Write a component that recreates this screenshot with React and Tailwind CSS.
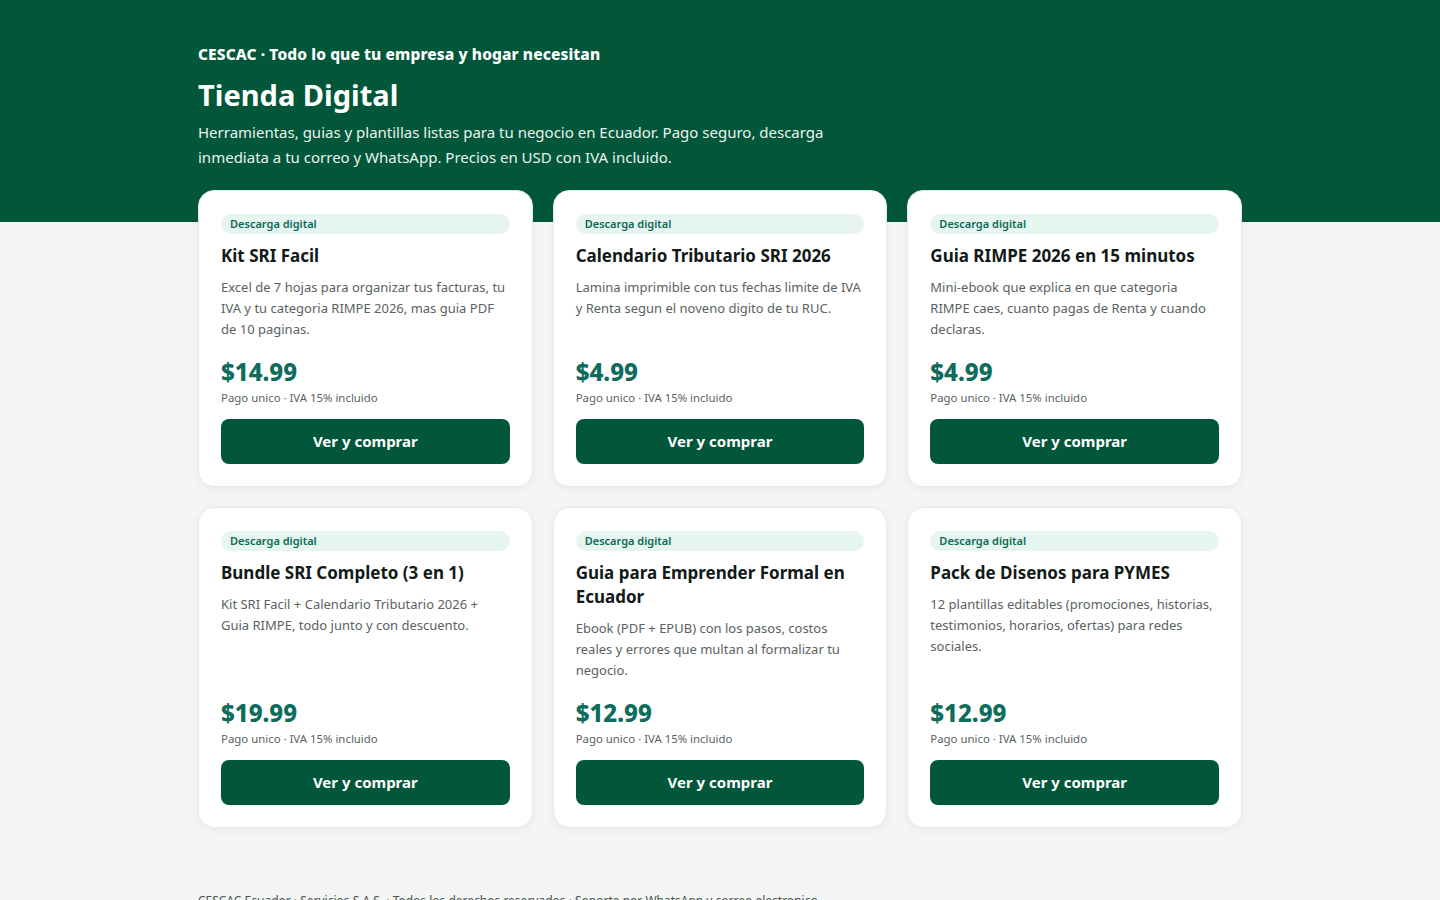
import React from "react";

const products = [
  {
    title: "Kit SRI Facil",
    desc: "Excel de 7 hojas para organizar tus facturas, tu IVA y tu categoria RIMPE 2026, mas guia PDF de 10 paginas.",
    price: "$14.99",
  },
  {
    title: "Calendario Tributario SRI 2026",
    desc: "Lamina imprimible con tus fechas limite de IVA y Renta segun el noveno digito de tu RUC.",
    price: "$4.99",
  },
  {
    title: "Guia RIMPE 2026 en 15 minutos",
    desc: "Mini-ebook que explica en que categoria RIMPE caes, cuanto pagas de Renta y cuando declaras.",
    price: "$4.99",
  },
  {
    title: "Bundle SRI Completo (3 en 1)",
    desc: "Kit SRI Facil + Calendario Tributario 2026 + Guia RIMPE, todo junto y con descuento.",
    price: "$19.99",
  },
  {
    title: "Guia para Emprender Formal en Ecuador",
    desc: "Ebook (PDF + EPUB) con los pasos, costos reales y errores que multan al formalizar tu negocio.",
    price: "$12.99",
  },
  {
    title: "Pack de Disenos para PYMES",
    desc: "12 plantillas editables (promociones, historias, testimonios, horarios, ofertas) para redes sociales.",
    price: "$12.99",
  },
];

function Card({ p }) {
  return (
    <div className="flex flex-col rounded-2xl border border-[#e3ebe8] bg-white px-[22px] pt-[23px] pb-[22px] shadow-[0_2px_8px_rgba(0,40,25,0.05)]">
      <div className="rounded-full bg-[#e7f5f1] px-[9px] py-[3px] text-[11px] font-semibold leading-[14px] text-[#0b6a55]">
        Descarga digital
      </div>
      <h2 className="mt-[10px] text-[17px] font-bold leading-[24px] text-[#111a17]">{p.title}</h2>
      <p className="mt-[9px] pr-[3px] text-[13px] leading-[21px] text-[#5a625f]">{p.desc}</p>
      <div className="mt-auto pt-[17px]">
        <div className="text-[24px] font-extrabold leading-[30px] text-[#0e6c5c]">{p.price}</div>
        <div className="mt-[4px] text-[11.4px] leading-[14px] text-[#5a625f]">Pago unico · IVA 15% incluido</div>
        <button className="mt-[14px] flex h-[45px] w-full items-center justify-center rounded-lg bg-[#02563a] text-[15px] font-bold text-white">
          Ver y comprar
        </button>
      </div>
    </div>
  );
}

export default function App() {
  return (
    <div className="min-h-[900px] bg-[#f3f6f4]" style={{ fontFamily: '"Noto Sans", sans-serif' }}>
      <header className="bg-[#02573a] pt-[45px] pb-[52px] text-white">
        <div className="mx-auto w-[1044px]">
          <div className="text-[15.5px] font-extrabold leading-[18px] tracking-[0.1px]">CESCAC · Todo lo que tu empresa y hogar necesitan</div>
          <h1 className="mt-[13px] text-[29px] font-bold leading-[38px]">Tienda Digital</h1>
          <p className="mt-[6px] max-w-[640px] text-[15px] leading-[25px] text-[#e9f3ee]">
            Herramientas, guias y plantillas listas para tu negocio en Ecuador. Pago seguro, descarga inmediata a tu correo y WhatsApp. Precios en USD con IVA incluido.
          </p>
        </div>
      </header>
      <main className="mx-auto -mt-[32px] w-[1044px]">
        <div className="grid grid-cols-3 gap-x-[20px] gap-y-[20px]">
          {products.map((p) => (
            <Card key={p.title} p={p} />
          ))}
        </div>
        <footer className="mt-[64px] pb-10 text-[12px] text-[#4a524f]">
          CESCAC Ecuador · Servicios S.A.S. · Todos los derechos reservados · Soporte por WhatsApp y correo electronico
        </footer>
      </main>
    </div>
  );
}
